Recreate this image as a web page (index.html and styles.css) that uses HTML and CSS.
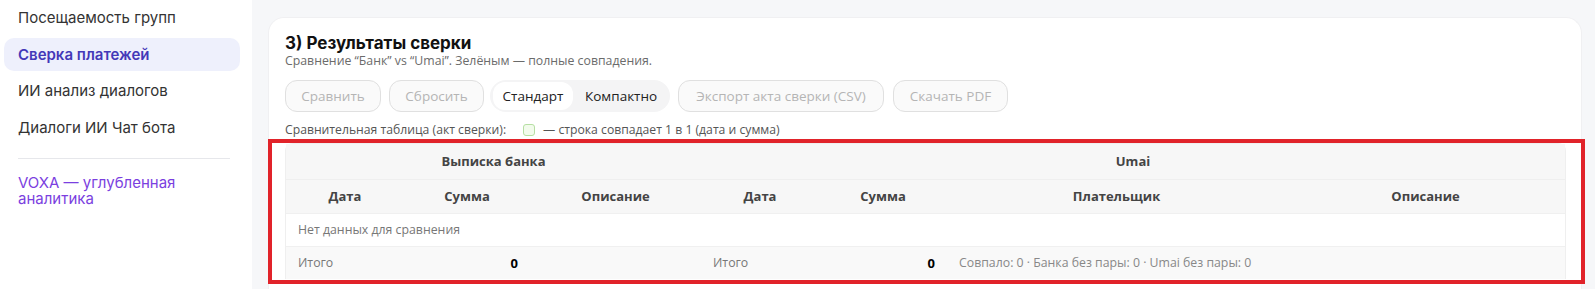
FILE: index.html
```html
<!DOCTYPE html>
<html lang="ru">
<head>
<meta charset="utf-8">
<title>Сверка платежей</title>
<link rel="stylesheet" href="styles.css">
</head>
<body>
<div class="app">
  <aside class="sidebar">
    <a class="nav-item">Посещаемость групп</a>
    <a class="nav-item active">Сверка платежей</a>
    <a class="nav-item">ИИ анализ диалогов</a>
    <a class="nav-item">Диалоги ИИ Чат бота</a>
    <div class="nav-divider"></div>
    <a class="nav-link">VOXA — углубленная аналитика</a>
  </aside>
  <main class="main">
    <section class="card">
      <h2 class="card-title">3) Результаты сверки</h2>
      <p class="card-sub">Сравнение “Банк” vs “Umai”. Зелёным — полные совпадения.</p>
      <div class="toolbar">
        <button class="btn btn-compare" disabled>Сравнить</button>
        <button class="btn btn-reset" disabled>Сбросить</button>
        <div class="seg">
          <span class="seg-item on">Стандарт</span>
          <span class="seg-item">Компактно</span>
        </div>
        <button class="btn btn-export" disabled>Экспорт акта сверки (CSV)</button>
        <button class="btn btn-pdf" disabled>Скачать PDF</button>
      </div>
      <div class="legend">
        <span>Сравнительная таблица (акт сверки):</span>
        <span class="swatch"></span>
        <span>— строка совпадает 1 в 1 (дата и сумма)</span>
      </div>
      <div class="table-wrap">
        <table class="cmp">
          <colgroup>
            <col class="c1"><col class="c2"><col class="c3"><col class="c4"><col class="c5"><col class="c6"><col class="c7">
          </colgroup>
          <thead>
            <tr class="h1">
              <th colspan="3">Выписка банка</th>
              <th colspan="4">Umai</th>
            </tr>
            <tr class="h2">
              <th>Дата</th><th>Сумма</th><th>Описание</th>
              <th>Дата</th><th>Сумма</th><th>Плательщик</th><th>Описание</th>
            </tr>
          </thead>
          <tbody>
            <tr class="empty"><td colspan="7">Нет данных для сравнения</td></tr>
          </tbody>
          <tfoot>
            <tr class="total">
              <td class="lbl">Итого</td>
              <td class="num">0</td>
              <td></td>
              <td class="lbl">Итого</td>
              <td class="num">0</td>
              <td colspan="2" class="summary">Совпало: 0 · Банка без пары: 0 · Umai без пары: 0</td>
            </tr>
          </tfoot>
        </table>
        <div class="highlight"></div>
      </div>
    </section>
  </main>
</div>
</body>
</html>
```

FILE: styles.css
```css
* { box-sizing: border-box; }
html, body { margin: 0; padding: 0; }
body {
  background: #f6f7f9;
  font-family: "Open Sans", "Noto Sans", sans-serif;
  color: #222;
  overflow: hidden;
}
.app {
  display: flex;
  height: 289px;
  overflow: hidden;
}
.sidebar {
  width: 252px;
  flex: none;
  background: #ffffff;
  padding: 1px 12px 0 4px;
  display: flex;
  flex-direction: column;
  font-family: Inter, "Noto Sans", sans-serif;
  font-size: 15px;
}
.nav-item {
  display: flex;
  align-items: center;
  height: 33px;
  padding-left: 14px;
  margin-bottom: 3.6px;
  color: #333;
  border-radius: 10px;
  white-space: nowrap;
}
.nav-item.active {
  background: #eef0fc;
  color: #4338b8;
  font-weight: 600;
}
.nav-divider {
  height: 1px;
  background: #e6e7eb;
  margin: 11px 10px 16px 14px;
}
.nav-link {
  padding-left: 14px;
  padding-right: 60px;
  color: #7b3fe0;
  line-height: 16px;
}
.main {
  flex: 1;
  padding: 17px 13px 0 16px;
}
.card {
  background: #ffffff;
  border: 1px solid #f0f0f2;
  border-bottom: none;
  border-radius: 16px 16px 0 0;
  padding: 15px 15px 0 16px;
  height: 272px;
}
.card-title {
  margin: 0;
  font-family: Inter, "Noto Sans", sans-serif;
  font-size: 17px;
  font-weight: 700;
  line-height: 20px;
  color: #111;
}
.card-sub {
  margin: 0;
  font-size: 12.3px;
  line-height: 16px;
  color: #6b6b6b;
}
.toolbar {
  display: flex;
  align-items: center;
  margin-top: 11px;
  height: 32px;
}
.btn {
  height: 32px;
  padding: 0 8px;
  border: 1px solid #e0e0e0;
  background: #fafafa;
  border-radius: 12px;
  font-family: "Open Sans", sans-serif;
  font-size: 13.5px;
  color: #b5b5b5;
  white-space: nowrap;
  text-align: center;
  margin-right: 8px;
}
.btn-compare { width: 96px; }
.btn-reset { width: 95px; margin-right: 6px; }
.btn-export { width: 206px; margin-right: 9px; }
.btn-pdf { width: 115px; }
.seg {
  display: flex;
  align-items: center;
  height: 32px;
  width: 180px;
  padding: 2px 3px;
  background: #f4f4f5;
  border-radius: 16px;
  margin-right: 8px;
}
.seg-item {
  font-size: 13.5px;
  color: #222;
  height: 28px;
  display: flex;
  align-items: center;
  white-space: nowrap;
}
.seg-item.on {
  width: 80px;
  justify-content: center;
  background: #ffffff;
  border-radius: 12px;
}
.seg-item + .seg-item { padding-left: 12px; }
.legend {
  display: flex;
  align-items: center;
  margin-top: 10px;
  font-size: 12.2px;
  line-height: 16px;
  color: #555;
}
.swatch {
  width: 12px;
  height: 12px;
  border: 1px solid #b6dfa3;
  background: #f2fbec;
  border-radius: 3px;
  margin: 0 8px 0 17px;
}
.table-wrap {
  position: relative;
  margin-top: 5px;
  border: 1px solid #efefef;
  border-bottom: none;
  border-radius: 8px 8px 0 0;
}
.cmp {
  width: 100%;
  border-collapse: collapse;
  table-layout: fixed;
  font-size: 12.3px;
}
.c1 { width: 118px; }
.c2 { width: 126px; }
.c3 { width: 171px; }
.c4 { width: 118px; }
.c5 { width: 128px; }
.c6 { width: 339px; }
.c7 { width: auto; }
.cmp th {
  background: #f7f7f7;
  font-size: 13px;
  font-weight: 700;
  color: #444;
  text-align: center;
  padding: 0 12px;
}
.cmp .h1 th { height: 35px; border-bottom: 1px solid #efefef; }
.cmp .h2 th { height: 34px; }
.cmp td { padding: 0 12px; white-space: nowrap; }
.empty td {
  height: 33px;
  background: #ffffff;
  color: #777;
  border-top: 1px solid #f0f0f0;
  border-bottom: 1px solid #f0f0f0;
}
.total td {
  height: 33px;
  background: #f9f9f9;
}
.total .lbl { color: #777; }
.total .num { text-align: right; font-weight: 700; color: #000; font-size: 13px; }
.total .summary { color: #888; }
.highlight {
  position: absolute;
  left: -18px;
  top: -5px;
  right: -20px;
  bottom: -5px;
  border: 4px solid #e1232a;
  pointer-events: none;
}
```
